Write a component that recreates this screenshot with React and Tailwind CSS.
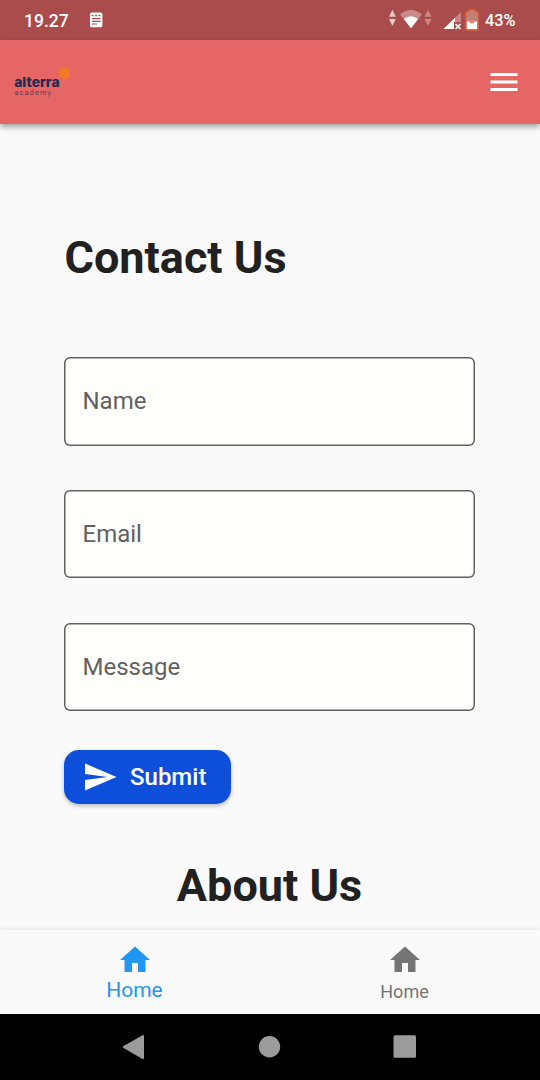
import React from "react";

const fields = ["Name", "Email", "Message"];

function Logo() {
  return (
    <svg width="60" height="36" viewBox="0 0 60 36" className="block">
      <circle cx="54.2" cy="9" r="6" fill="#f37a24" />
      <text x="4.2" y="23" textLength="45.4" lengthAdjust="spacingAndGlyphs" fontFamily="Inter, sans-serif" fontWeight="800" fontSize="13.2" fill="#202a52">alterra</text>
      <text x="4.6" y="31.2" textLength="36.5" lengthAdjust="spacing" fontFamily="Inter, sans-serif" fontSize="7.2" fill="#202a52" opacity="0.7">academy</text>
    </svg>
  );
}

function StatusBar() {
  return (
    <div className="flex h-10 shrink-0 items-center bg-[#aa4c4b] pl-6 text-white">
      <span className="relative top-[0.5px] w-[66px] text-[17.5px] leading-5 font-medium">19.27</span>
      <svg width="13" height="16" viewBox="0 0 13 16">
        <rect x="0" y="0.5" width="12.4" height="14.8" rx="1.9" fill="#fff" />
        <path d="M1.500 3.600h2M5 3.600h2M8.500 3.600h2M2 6.700h8.600M2 9.300h8.600M2 12h5" stroke="#aa4c4b" strokeWidth="1.200" />
      </svg>
      <svg className="ml-auto mr-[5px]" width="96" height="24" viewBox="384 8 96 24">
        <path d="M389 16.800l3.400-7 3.400 7zM389 19h6.800l-3.400 7z" fill="#e6c9c8" />
        <path d="M400 14.200q11-8.600 22 0L411 28.200z" fill="#c98b8a" />
        <path d="M403.800 19q7.200-5.600 14.400 0L411 28.200z" fill="#fff" />
        <path d="M424.600 16.800l3.400-7 3.400 7zM424.600 19h6.800l-3.400 7z" fill="#c98685" />
        <path d="M443.500 29L461 12v17z" fill="#c98483" />
        <path d="M443.500 29L455 17.700V29z" fill="#fff" />
        <path d="M454 22h8v8h-8z" fill="#aa4c4b" />
        <path d="M455.500 24l5 5m0-5l-5 5" stroke="#fff" strokeWidth="1.600" />
        <path d="M469 9.900h5.800v2h2.200q1 0 1 1V28.800q0 1-1 1h-10q-1 0-1-1V12.900q0-1 1-1h2z" fill="#c1817b" stroke="#ef6338" strokeWidth="1.300" />
        <path d="M466.900 21.500h10.200v7.500h-10.200z" fill="#fff" />
        <path d="M469.800 22.200h4.400" stroke="#ef6338" strokeWidth="1.500" />
      </svg>
      <span className="relative top-[0.5px] w-[55px] text-[16.3px] leading-5 font-medium">43%</span>
    </div>
  );
}

function HomeIcon() {
  return (
    <svg width="36" height="36" viewBox="0 0 24 24" fill="currentColor" className="block">
      <path d="M10 20v-6h4v6h5v-8h3L12 3 2 12h3v8z" />
    </svg>
  );
}

export default function App() {
  return (
    <div className="flex h-[1080px] w-[540px] flex-col overflow-hidden bg-[#fafafa] font-['Roboto',sans-serif]">
      <StatusBar />
      <header className="z-10 flex h-[84px] shrink-0 items-center justify-between bg-[#e66665] pr-[18.500px] pl-[10px] shadow-[0_3px_6px_rgba(0,0,0,0.36)]">
        <Logo />
        <button aria-label="Menu">
          <svg width="36" height="36" viewBox="0 0 24 24" fill="#fff" className="block">
            <path d="M3 18h18v-2H3v2zm0-5h18v-2H3v2zm0-7v2h18V6H3z" />
          </svg>
        </button>
      </header>

      <main className="flex min-h-0 flex-1 flex-col px-16 pt-[107px] text-[#212121]">
        <h1 className="pl-[0.5px] text-[45px] leading-[53px] font-bold">Contact Us</h1>
        <form className="mt-[73px] flex flex-col items-start">
          <div className="flex flex-col gap-[44.25px]">
            {fields.map((label) => (
              <label key={label} className="flex h-[88.5px] w-[411px] items-center rounded-[6px] bg-[#fffffb] pl-[18.5px] text-[24px] leading-7 text-[#626262] shadow-[inset_0_0_0_1.5px_#616161]">
                {label}
              </label>
            ))}
          </div>
          <button type="button" className="mt-[39px] flex h-[54px] w-[167px] items-center rounded-[15px] bg-[#0d4eda] pl-[18px] text-[24px] font-medium text-white shadow-[0_2px_4px_rgba(0,0,0,0.26)]">
            <svg width="36" height="36" viewBox="0 0 24 24" fill="currentColor">
              <path d="M2.01 21L23 12 2.01 3 2 10l15 2-15 2z" />
            </svg>
            <span className="ml-3">Submit</span>
          </button>
        </form>
        <h2 className="mt-[55px] pr-px text-center text-[45px] leading-[53px] font-bold">About Us</h2>
      </main>

      <nav className="z-10 grid h-[84px] shrink-0 grid-cols-2 bg-[#fafafa] shadow-[0_-1px_4px_rgba(0,0,0,0.09)]">
        <div className="flex flex-col items-center pt-3 pr-px text-[#2196f3]">
          <HomeIcon />
          <span className="text-[21px] leading-6">Home</span>
        </div>
        <div className="flex flex-col items-center pt-3 pr-px text-[#757575]">
          <HomeIcon />
          <span className="mt-[3px] text-[18px] leading-[22px]">Home</span>
        </div>
      </nav>

      <div className="flex h-[66px] shrink-0 items-center bg-black">
        <svg width="540" height="66" viewBox="0 0 540 66" fill="#9b9b9b">
          <path d="M123.200 32.200L142.500 21.200q1.500-.6 1.500 1v21.700q0 1.500-1.500 1L123.200 33.800q-1-.8 0-1.600z" />
          <circle cx="269.500" cy="32.700" r="10.700" />
          <rect x="393.500" y="21.300" width="22.500" height="22.500" rx="1.500" />
        </svg>
      </div>
    </div>
  );
}
